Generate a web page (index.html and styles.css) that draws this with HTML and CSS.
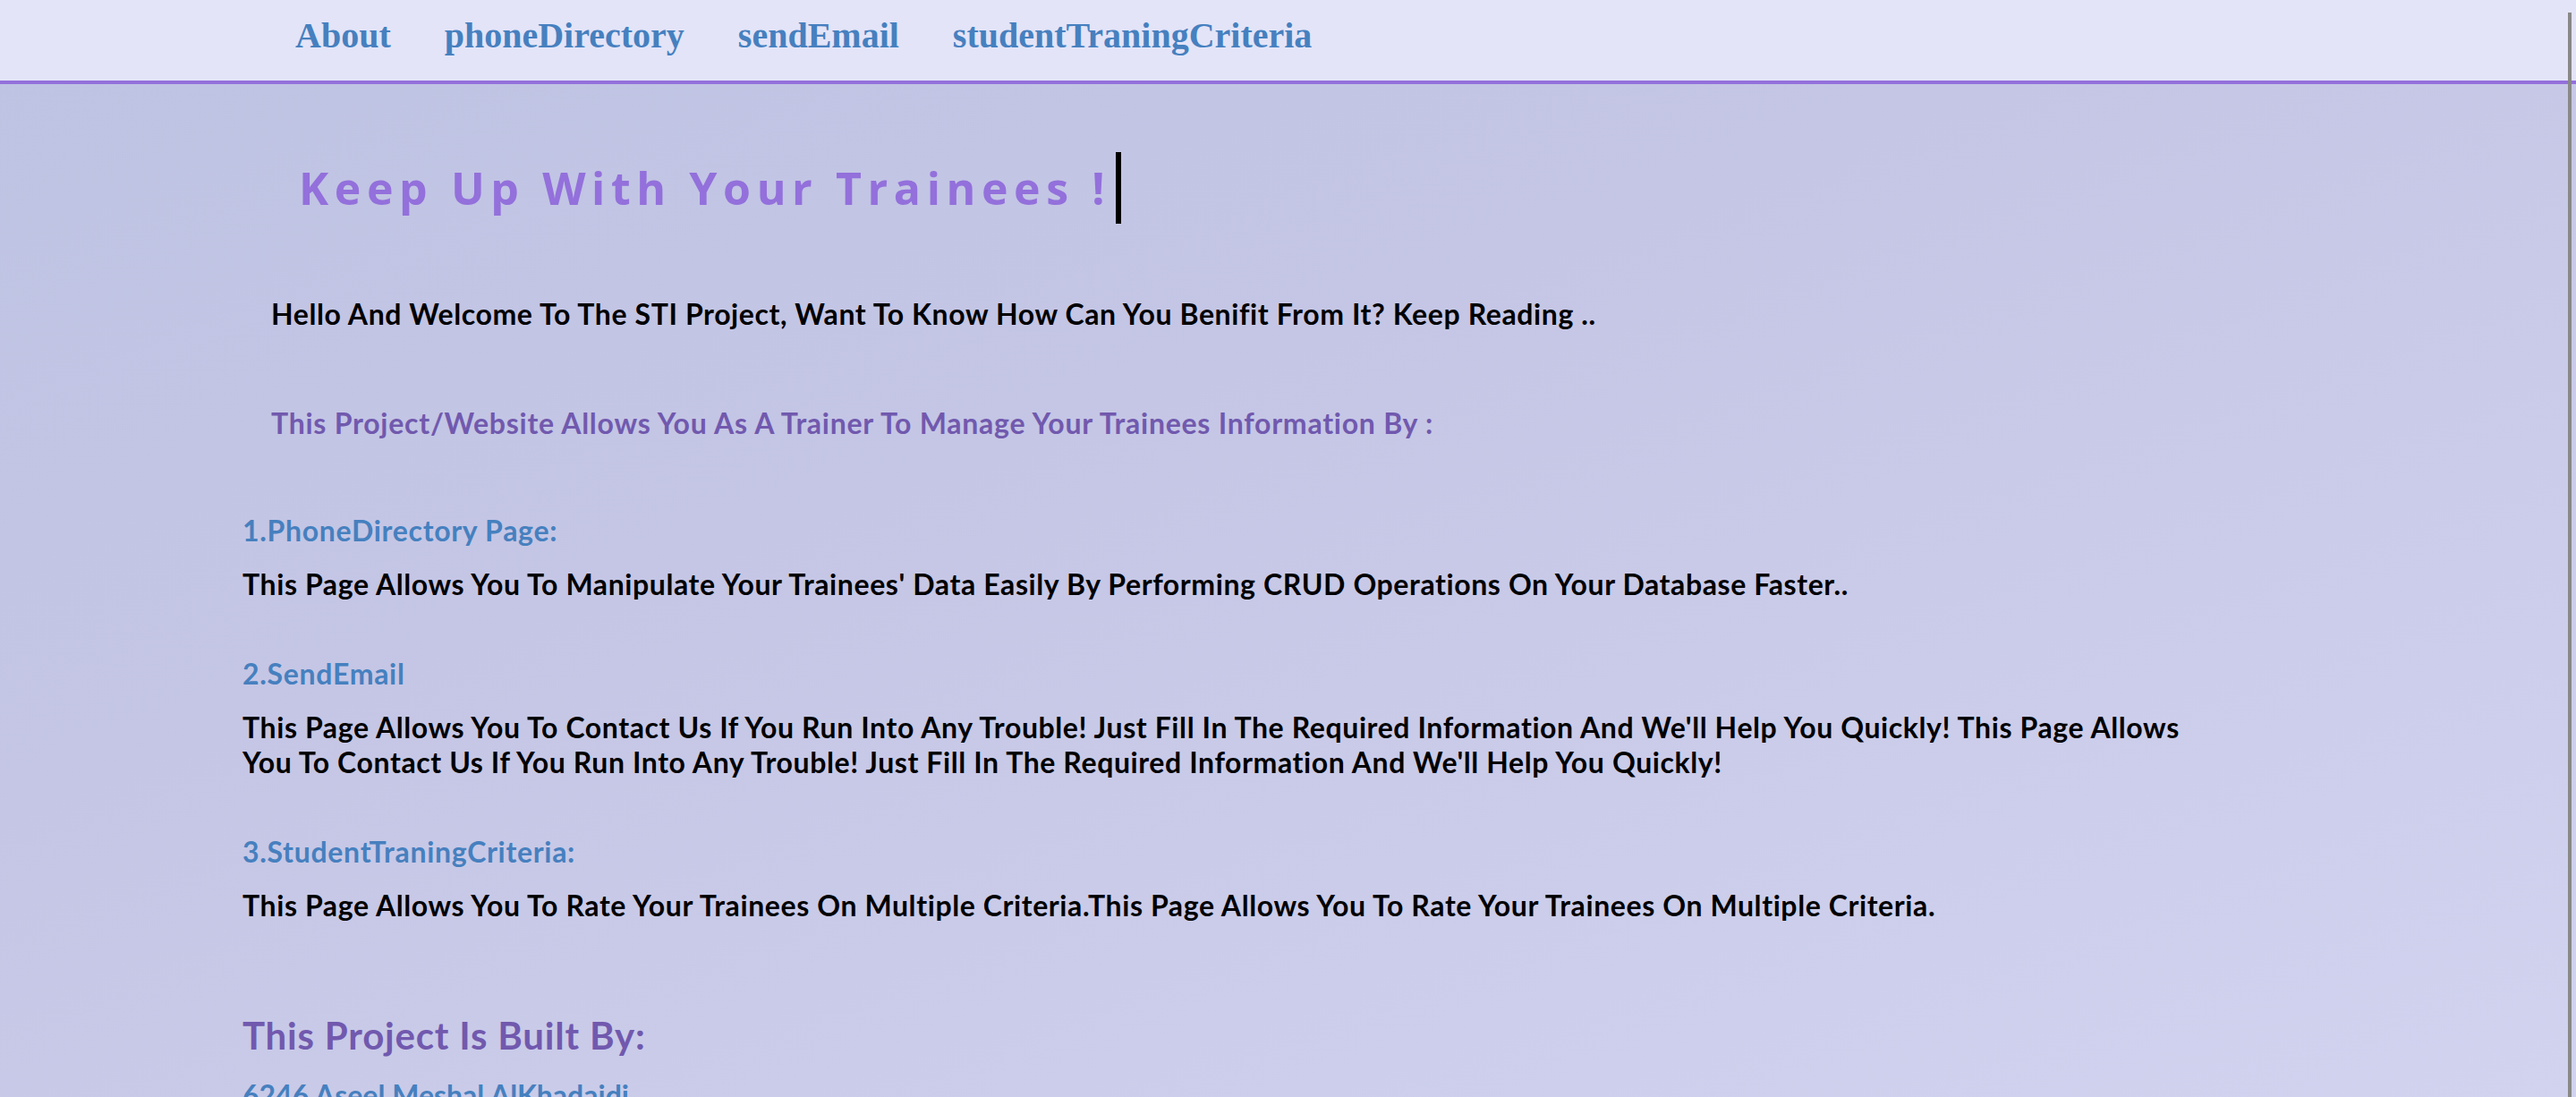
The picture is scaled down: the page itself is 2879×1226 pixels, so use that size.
FILE: index.html
```html
<!DOCTYPE html>
<html lang="en">
<head>
<meta charset="utf-8">
<title>STI Project</title>
<link rel="stylesheet" href="styles.css">
</head>
<body>
<nav class="topnav">
  <a class="navlink" href="#">About</a>
  <a class="navlink" href="#">phoneDirectory</a>
  <a class="navlink" href="#">sendEmail</a>
  <a class="navlink" href="#">studentTraningCriteria</a>
</nav>
<div class="scroll-line"></div>
<main class="content">
  <div class="hero"><h1 class="typing">Keep Up With Your Trainees !</h1></div>
  <p class="welcome">Hello And Welcome To The STI Project, Want To Know How Can You Benifit From It? Keep Reading ..</p>
  <p class="intro">This Project/Website Allows You As A Trainer To Manage Your Trainees Information By :</p>
  <section class="feature">
    <h3 class="feature-title">1.PhoneDirectory Page:</h3>
    <p class="feature-text">This Page Allows You To Manipulate Your Trainees' Data Easily By Performing CRUD Operations On Your Database Faster..</p>
  </section>
  <section class="feature">
    <h3 class="feature-title">2.SendEmail</h3>
    <p class="feature-text">This Page Allows You To Contact Us If You Run Into Any Trouble! Just Fill In The Required Information And We'll Help You Quickly! This Page Allows You To Contact Us If You Run Into Any Trouble! Just Fill In The Required Information And We'll Help You Quickly!</p>
  </section>
  <section class="feature">
    <h3 class="feature-title">3.StudentTraningCriteria:</h3>
    <p class="feature-text">This Page Allows You To Rate Your Trainees On Multiple Criteria.This Page Allows You To Rate Your Trainees On Multiple Criteria.</p>
  </section>
  <h2 class="built">This Project Is Built By:</h2>
  <p class="member">6246 Aseel Meshal AlKhadaidi</p>
</main>
</body>
</html>
```
FILE: styles.css
```css
html, body {
  margin: 0;
  padding: 0;
}
body {
  min-height: 100vh;
  background: linear-gradient(160deg, #bec3e3 0%, #c5c6e5 40%, #d1d3ef 100%);
  background-attachment: fixed;
  font-family: Lato, "Open Sans", sans-serif;
  overflow: hidden;
}
.topnav {
  display: flex;
  align-items: flex-start;
  gap: 60px;
  height: 70px;
  padding: 20px 0 0 330px;
  background: #e3e4f8;
  border-bottom: 4px solid #9370db;
}
.navlink {
  font-family: "Liberation Serif", "Times New Roman", serif;
  font-weight: bold;
  font-size: 40px;
  line-height: 40px;
  color: #4680bf;
  text-decoration: none;
}
.scroll-line {
  position: fixed;
  top: 14px;
  bottom: 0;
  right: 5px;
  width: 4px;
  background: #888888;
}
.content {
  padding-left: 271px;
  width: 2200px;
}
.hero {
  margin: 76px 0 0 63px;
}
.typing {
  display: inline-block;
  margin: 0;
  padding-right: 6px;
  font-family: "Open Sans", sans-serif;
  font-weight: 700;
  font-size: 50px;
  line-height: 80px;
  letter-spacing: 6.6px;
  color: #9370db;
  border-right: 6px solid #000;
  white-space: nowrap;
}
.welcome, .intro {
  margin: 0;
  padding-left: 32px;
  font-size: 32px;
  line-height: 39px;
  font-weight: 700;
  letter-spacing: 0.6px;
}
.welcome {
  margin-top: 81px;
  color: #000;
}
.intro {
  margin-top: 83px;
  color: #7159ae;
  letter-spacing: 0.75px;
}
.feature {
  margin-top: 61px;
}
.intro + .feature {
  margin-top: 81px;
}
.feature-title {
  margin: 0;
  font-size: 32px;
  line-height: 39px;
  font-weight: 700;
  letter-spacing: 0.7px;
  color: #4680bf;
}
.feature-text {
  margin: 21px 0 0;
  font-size: 32px;
  line-height: 39px;
  font-weight: 700;
  letter-spacing: 0.6px;
  color: #000;
}
.built {
  margin: 101px 0 0;
  font-size: 42px;
  line-height: 50px;
  font-weight: 700;
  letter-spacing: 0.8px;
  color: #7159ae;
}
.member {
  margin: 22px 0 0;
  font-size: 32px;
  line-height: 39px;
  font-weight: 700;
  color: #4680bf;
}
```
